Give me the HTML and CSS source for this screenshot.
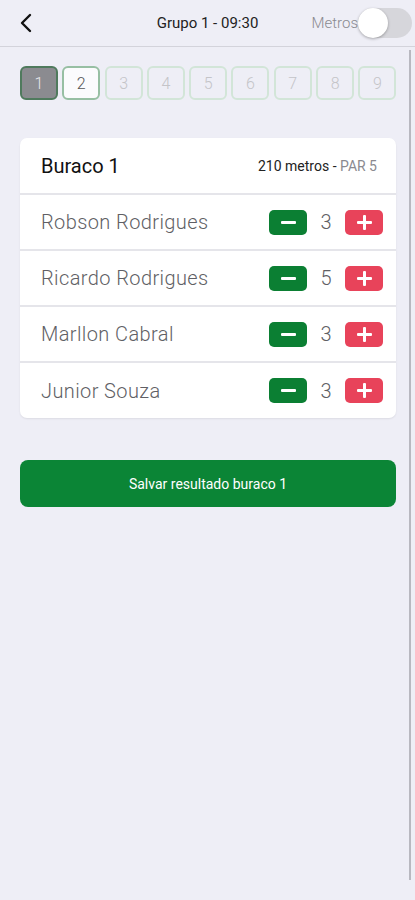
FILE: index.html
```html
<!DOCTYPE html>
<html lang="pt">
<head>
    <meta charset="UTF-8">
    <meta name="viewport" content="width=device-width, initial-scale=1.0">
    <title>Grupo 1 - 09:30</title>
    <link rel="stylesheet" href="styles.css">
</head>
<body>
    <div class="topbar">
        <span class="back">
            <svg width="14" height="20" viewBox="0 0 14 20"><path d="M11 2 L3 10 L11 18" fill="none" stroke="#111" stroke-width="2.4" stroke-linecap="round" stroke-linejoin="round"/></svg>
        </span>
        <span class="title">Grupo 1 - 09:30</span>
        <span class="metros">Metros</span>
        <span class="toggle"><span class="knob"></span></span>
    </div>

    <div class="scroller"></div>

    <div class="holes">
        <span class="hole current">1</span>
        <span class="hole next">2</span>
        <span class="hole">3</span>
        <span class="hole">4</span>
        <span class="hole">5</span>
        <span class="hole">6</span>
        <span class="hole">7</span>
        <span class="hole">8</span>
        <span class="hole">9</span>
    </div>

    <div class="card">
        <div class="card-head">
            <span class="hole-name">Buraco 1</span>
            <span class="hole-info">210 metros - <span class="par">PAR 5</span></span>
        </div>
        <div class="player">
            <span class="name">Robson Rodrigues</span>
            <span class="btn minus"><span class="bar"></span></span>
            <span class="score">3</span>
            <span class="btn plus"><span class="bar"></span><span class="bar vert"></span></span>
        </div>
        <div class="player">
            <span class="name">Ricardo Rodrigues</span>
            <span class="btn minus"><span class="bar"></span></span>
            <span class="score">5</span>
            <span class="btn plus"><span class="bar"></span><span class="bar vert"></span></span>
        </div>
        <div class="player">
            <span class="name">Marllon Cabral</span>
            <span class="btn minus"><span class="bar"></span></span>
            <span class="score">3</span>
            <span class="btn plus"><span class="bar"></span><span class="bar vert"></span></span>
        </div>
        <div class="player">
            <span class="name">Junior Souza</span>
            <span class="btn minus"><span class="bar"></span></span>
            <span class="score">3</span>
            <span class="btn plus"><span class="bar"></span><span class="bar vert"></span></span>
        </div>
    </div>

    <button class="save">Salvar resultado buraco 1</button>
</body>
</html>
```

FILE: styles.css
```css
body {
    margin: 0;
    font-family: Roboto, "Noto Sans", sans-serif;
    background-color: #eeeef6;
    color: #222;
}

.topbar {
    height: 46px;
    border-bottom: 1px solid #d3d3db;
    display: flex;
    align-items: center;
    position: relative;
}
.back {
    margin-left: 19px;
    display: flex;
}
.title {
    position: absolute;
    left: 0;
    right: 0;
    text-align: center;
    font-size: 15px;
    color: #222;
    pointer-events: none;
}
.metros {
    margin-left: auto;
    font-size: 15px;
    font-weight: 300;
    color: #8a8a90;
}
.toggle {
    width: 54px;
    height: 30px;
    border-radius: 15px;
    background: #d6d6db;
    margin-right: 3px;
    display: flex;
    align-items: center;
}
.knob {
    width: 30px;
    height: 30px;
    border-radius: 50%;
    background: #fff;
    box-shadow: 0 1px 3px rgba(0,0,0,0.3);
}

.scroller {
    position: absolute;
    left: 409px;
    top: 50px;
    width: 2px;
    height: 830px;
    background: #b8b8c0;
}

.holes {
    display: flex;
    gap: 4.3px;
    padding: 19px 0 0 20px;
}
.hole {
    width: 34px;
    height: 30px;
    border: 2px solid #d2e5d8;
    border-radius: 6px;
    display: flex;
    align-items: center;
    justify-content: center;
    font-size: 16px;
    font-weight: 300;
    color: #c4c4c8;
}
.hole.current {
    background: #8b8b90;
    border-color: #4f7a5d;
    color: #e6e6ea;
}
.hole.next {
    background: #fbfbfd;
    border-color: #97bfa3;
    color: #555;
}

.card {
    margin: 38px 19px 0 20px;
    background: #fff;
    border-radius: 7px;
    box-shadow: 0 1px 2px rgba(0,0,0,0.08);
}
.card-head {
    height: 55px;
    display: flex;
    align-items: center;
    padding: 0 19px 0 21px;
    border-bottom: 2px solid #e5e5ea;
}
.hole-name {
    font-size: 20px;
    color: #111;
}
.hole-info {
    margin-left: auto;
    font-size: 14px;
    color: #222;
}
.par {
    color: #8a8a90;
}
.player {
    height: 54px;
    display: flex;
    align-items: center;
    padding: 0 13px 0 21px;
    border-bottom: 2px solid #e5e5ea;
}
.player:last-child {
    border-bottom: none;
    height: 55px;
}
.name {
    font-size: 20px;
    font-weight: 300;
    color: #5f5f65;
    letter-spacing: 0.4px;
}
.btn {
    width: 38px;
    height: 25px;
    border-radius: 5px;
    position: relative;
    display: flex;
    align-items: center;
    justify-content: center;
}
.minus {
    margin-left: auto;
    background: #0b7f33;
}
.plus {
    background: #e8435a;
}
.bar {
    width: 15px;
    height: 3px;
    background: #fff;
    border-radius: 1px;
    position: absolute;
}
.bar.vert {
    width: 3px;
    height: 15px;
}
.score {
    width: 38px;
    text-align: center;
    font-size: 20px;
    font-weight: 300;
    color: #5f5f65;
}

.save {
    display: block;
    margin: 42px 19px 0 20px;
    width: 376px;
    height: 47px;
    border: none;
    border-radius: 8px;
    background: #0b8536;
    color: #fff;
    font-family: Roboto, "Noto Sans", sans-serif;
    font-size: 14px;
}
```
